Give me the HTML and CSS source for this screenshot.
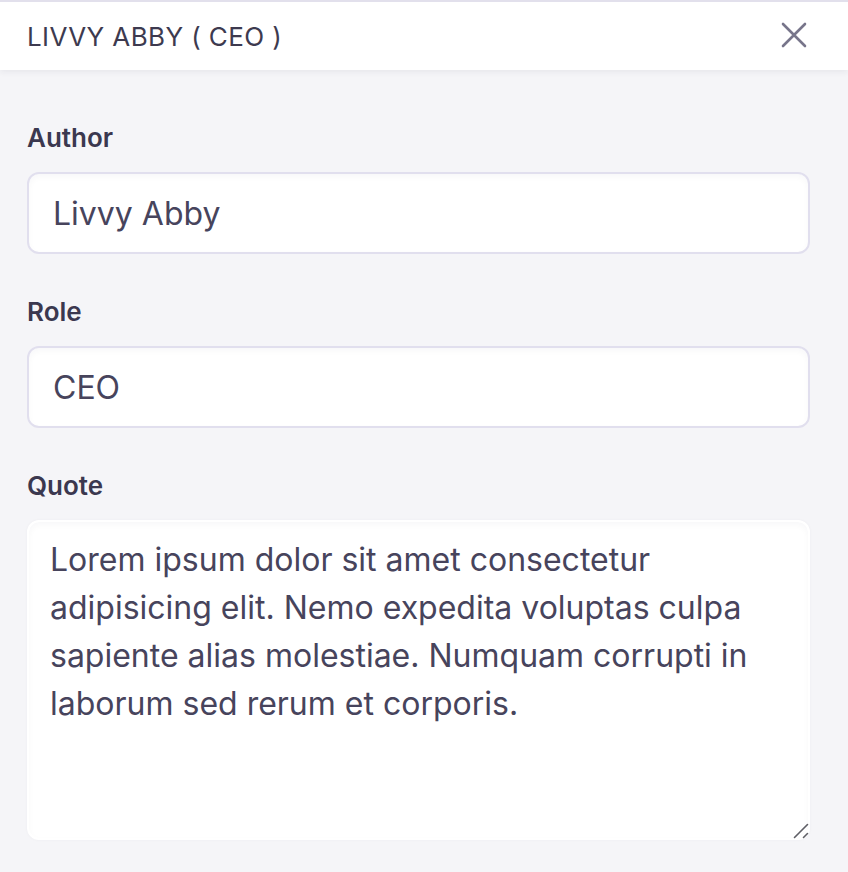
FILE: index.html
```html
<!DOCTYPE html>
<html lang="en">
<head>
<meta charset="utf-8">
<title>Livvy Abby</title>
<link rel="stylesheet" href="styles.css">
</head>
<body>
<header class="panel-header">
  <h1 class="panel-title">LIVVY ABBY ( CEO )</h1>
  <button class="close-btn" aria-label="Close">
    <svg width="26" height="26" viewBox="0 0 26 26"><path d="M2 2 L24 24 M24 2 L2 24" stroke="#77758a" stroke-width="2.6" stroke-linecap="round" fill="none"/></svg>
  </button>
</header>
<main class="panel-body">
  <div class="field">
    <label class="field-label">Author</label>
    <input class="field-input" type="text" value="Livvy Abby">
  </div>
  <div class="field">
    <label class="field-label">Role</label>
    <input class="field-input" type="text" value="CEO">
  </div>
  <div class="field">
    <label class="field-label">Quote</label>
    <div class="textarea-wrap">
      <textarea class="field-textarea">Lorem ipsum dolor sit amet consectetur adipisicing elit. Nemo expedita voluptas culpa sapiente alias molestiae. Numquam corrupti in laborum sed rerum et corporis.</textarea>
      <svg class="resizer" width="16" height="16" viewBox="0 0 16 16"><path d="M1.5 14.5 L14.5 1.5 M10.5 14.5 L14.5 10.5" stroke="#5f5f66" stroke-width="1.6" stroke-linecap="round" fill="none"/></svg>
    </div>
  </div>
</main>
</body>
</html>
```

FILE: styles.css
```css
* { box-sizing: border-box; }
html, body { margin: 0; padding: 0; }
body {
  background: #f5f5f8;
  font-family: Inter, "Noto Sans", sans-serif;
  color: #47445c;
  height: 872px;
  overflow: hidden;
}
.panel-header {
  height: 70px;
  border-top: 2px solid #e2e0ec;
  background: #ffffff;
  box-shadow: 0 2px 6px rgba(40, 36, 70, 0.07);
  display: flex;
  align-items: center;
  justify-content: space-between;
  padding: 0 41px 0 27px;
}
.panel-title {
  margin: 0;
  font-size: 26px;
  font-weight: 400;
  color: #3d3a4f;
  letter-spacing: 0.4px;
}
.close-btn {
  border: 0;
  background: none;
  padding: 0;
  width: 26px;
  height: 26px;
  display: flex;
  margin-top: -2px;
}
.panel-body {
  padding: 50px 38px 0 27px;
  display: flex;
  flex-direction: column;
  gap: 40px;
}
.field {
  display: flex;
  flex-direction: column;
  gap: 16px;
}
.field-label {
  font-size: 26px;
  line-height: 36px;
  font-weight: 600;
  color: #3b384f;
}
.field-input {
  height: 82px;
  border: 2px solid #e1dfee;
  border-radius: 12px;
  background: #ffffff;
  box-shadow: inset 0 3px 6px rgba(40, 36, 70, 0.03);
  padding: 0 24px;
  font-family: Inter, "Noto Sans", sans-serif;
  font-size: 32px;
  color: #47445c;
  outline: none;
}
.textarea-wrap {
  position: relative;
  display: flex;
}
.field-textarea {
  flex: 1;
  height: 320px;
  border: 2px solid #ffffff;
  border-radius: 12px;
  background: #ffffff;
  box-shadow: inset 0 3px 6px rgba(40, 36, 70, 0.03), 0 0 3px rgba(40, 36, 70, 0.04);
  padding: 14px 21px;
  font-family: Inter, "Noto Sans", sans-serif;
  font-size: 32px;
  line-height: 48px;
  color: #47445c;
  outline: none;
  resize: none;
}
.resizer {
  position: absolute;
  right: 1px;
  bottom: 1px;
}
```
